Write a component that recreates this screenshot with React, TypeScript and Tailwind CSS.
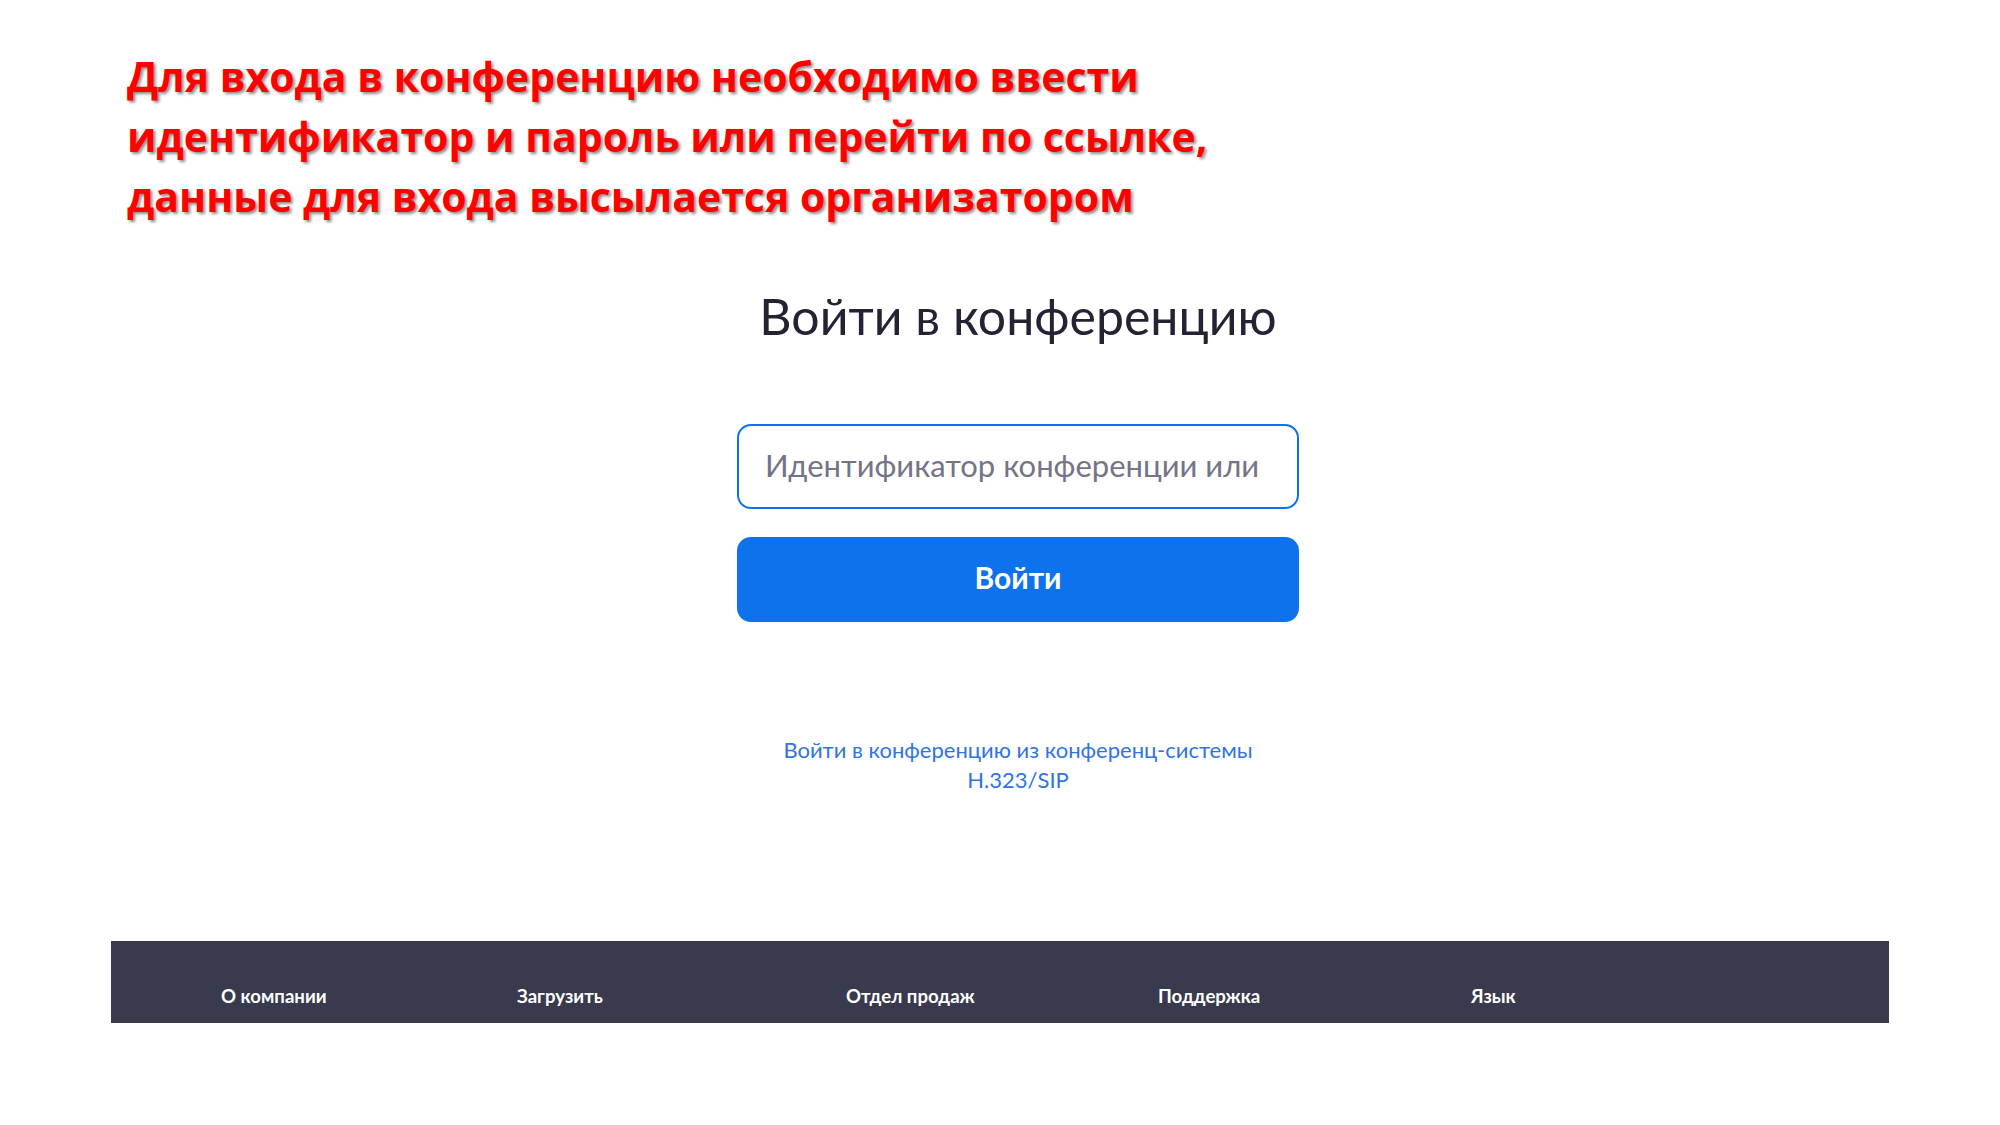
import { useState } from 'react';

const footerLinks = [
  { label: 'О компании', w: 'w-[296px]' },
  { label: 'Загрузить', w: 'w-[329px]' },
  { label: 'Отдел продаж', w: 'w-[312px]' },
  { label: 'Поддержка', w: 'w-[313px]' },
  { label: 'Язык', w: 'w-[200px]' },
];

export default function App() {
  const [meetingId, setMeetingId] = useState('');

  return (
    <div className="w-[2000px] h-[1125px] bg-white overflow-hidden font-['Lato','Noto_Sans',sans-serif]">
      {/* Slide caption */}
      <div className="pt-[46px] pl-[127px] text-[41px] leading-[60px] font-bold text-[#ff0000] font-['Open_Sans','Noto_Sans',sans-serif] [text-shadow:2px_2px_3px_rgba(0,0,0,0.45)]">
        Для входа в конференцию необходимо ввести
        <br />
        идентификатор и пароль или перейти по ссылке,
        <br />
        данные для входа высылается организатором
      </div>

      {/* Join form */}
      <main className="flex flex-col items-center pl-[36px] pt-[61px]">
        <h1 className="text-[50px] leading-[58px] font-normal text-[#232333]">Войти в конференцию</h1>

        <input
          type="text"
          value={meetingId}
          onChange={(e) => setMeetingId(e.target.value)}
          placeholder="Идентификатор конференции или"
          className="mt-[79px] w-[562px] h-[85px] pl-[26px] pr-4 pb-[4px] border-2 border-[#0e72ed] rounded-[14px] text-[31px] text-[#232333] placeholder:text-[#747487] focus:outline-none"
        />

        <button className="mt-[28px] w-[562px] h-[85px] pb-[4px] rounded-[14px] bg-[#0e72ed] text-white text-[30px] font-bold">
          Войти
        </button>

        <a href="#" className="mt-[113px] text-center text-[22px] leading-[30px] text-[#2f74e3]">
          Войти в конференцию из конференц-системы
          <br />
          H.323/SIP
        </a>
      </main>

      {/* Footer */}
      <footer className="mt-[146px] mx-[111px] h-[82px] bg-[#393a4d] flex pl-[110px] pt-[43px]">
        {footerLinks.map((item) => (
          <span key={item.label} className={`${item.w} text-[18.6px] leading-[24px] font-bold text-white`}>
            {item.label}
          </span>
        ))}
      </footer>
    </div>
  );
}
